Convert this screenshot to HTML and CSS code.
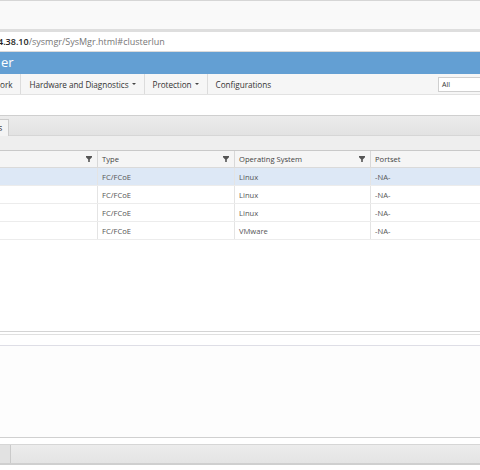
FILE: index.html
```html
<!DOCTYPE html>
<html lang="en">
<head>
  <meta charset="UTF-8" />
  <title>System Manager - LUNs</title>
  <link rel="stylesheet" href="styles.css">
</head>
<body>
  <div class="browser-top"></div>
  <div class="address">
    <span class="host">4.38.10</span><span class="path">/sysmgr/SysMgr.html#clusterlun</span>
  </div>

  <div class="titlebar">er</div>

  <div class="menubar">
    <ul class="menu">
      <li class="cut">ork</li>
      <li>Hardware and Diagnostics <span class="caret"></span></li>
      <li>Protection <span class="caret"></span></li>
      <li class="last">Configurations</li>
    </ul>
    <div class="search-scope">All</div>
  </div>

  <div class="spacer"></div>

  <div class="tabstrip">
    <div class="tab">s</div>
  </div>
  <div class="toolbar"></div>

  <div class="grid">
    <div class="row head">
      <div class="cell c1">
        <svg class="filter" width="6" height="6" viewBox="0 0 6 6"><path d="M0 0h6v1.2L3.8 3.4V6H2.2V3.4L0 1.2z" fill="#555"/></svg>
      </div>
      <div class="cell c2">Type
        <svg class="filter" width="6" height="6" viewBox="0 0 6 6"><path d="M0 0h6v1.2L3.8 3.4V6H2.2V3.4L0 1.2z" fill="#555"/></svg>
      </div>
      <div class="cell c3">Operating System
        <svg class="filter" width="6" height="6" viewBox="0 0 6 6"><path d="M0 0h6v1.2L3.8 3.4V6H2.2V3.4L0 1.2z" fill="#555"/></svg>
      </div>
      <div class="cell c4">Portset</div>
    </div>
    <div class="row selected">
      <div class="cell c1"></div>
      <div class="cell c2">FC/FCoE</div>
      <div class="cell c3">Linux</div>
      <div class="cell c4">-NA-</div>
    </div>
    <div class="row">
      <div class="cell c1"></div>
      <div class="cell c2">FC/FCoE</div>
      <div class="cell c3">Linux</div>
      <div class="cell c4">-NA-</div>
    </div>
    <div class="row">
      <div class="cell c1"></div>
      <div class="cell c2">FC/FCoE</div>
      <div class="cell c3">Linux</div>
      <div class="cell c4">-NA-</div>
    </div>
    <div class="row">
      <div class="cell c1"></div>
      <div class="cell c2">FC/FCoE</div>
      <div class="cell c3">VMware</div>
      <div class="cell c4">-NA-</div>
    </div>
  </div>

  <div class="splitter"></div>
  <div class="details"></div>
  <div class="hscroll">
    <div class="thumb"></div>
  </div>
</body>
</html>
```

FILE: styles.css
```css
* {
  box-sizing: border-box;
}

body {
  margin: 0;
  width: 480px;
  height: 470px;
  overflow: hidden;
  background: #fff;
  font-family: 'Open Sans', 'Segoe UI', sans-serif;
  color: #333;
}

.browser-top {
  height: 32px;
  background: #f9f9f9;
  border-top: 1px solid #d6d6d6;
  border-bottom: 3px solid #dedede;
}

.address {
  height: 20px;
  line-height: 19px;
  font-size: 9px;
  white-space: nowrap;
  border-bottom: 1px solid #dadada;
  text-indent: -2px;
}

.address .host {
  color: #222;
  font-weight: 600;
}

.address .path {
  color: #777;
}

.titlebar {
  height: 22px;
  line-height: 20px;
  background: #639fd3;
  color: #fff;
  font-size: 13px;
  padding-left: 1px;
}

.menubar {
  display: flex;
  justify-content: space-between;
  align-items: center;
  height: 21px;
  background: #f6f6f6;
  border-bottom: 1px solid #e2e2e2;
}

.menu {
  display: flex;
  margin: 0;
  padding: 0;
  list-style: none;
  height: 100%;
}

.menu li {
  display: flex;
  align-items: center;
  padding: 0 8px;
  font-size: 8.2px;
  letter-spacing: -0.05px;
  color: #333;
  border-right: 1px solid #dcdcdc;
  white-space: nowrap;
}

.menu li.cut {
  padding-left: 0;
}

.menu li.last {
  border-right: none;
}

.caret {
  display: inline-block;
  margin-left: 3px;
  border-left: 2px solid transparent;
  border-right: 2px solid transparent;
  border-top: 2px solid #444;
}

.search-scope {
  width: 46px;
  height: 15px;
  margin-right: -4px;
  border: 1px solid #cfcfcf;
  background: #fff;
  font-size: 7px;
  line-height: 13px;
  padding-left: 3px;
  color: #333;
}

.spacer {
  height: 20px;
}

.tabstrip {
  height: 21px;
  padding-top: 3px;
  background: linear-gradient(#ececec, #e2e2e2);
  border-top: 1px solid #cfcfcf;
  border-bottom: 1px solid #d6d6d6;
}

.tab {
  width: 9px;
  height: 17px;
  background: #f4f4f4;
  border: 1px solid #cccccc;
  border-left: none;
  border-bottom: none;
  font-size: 9px;
  line-height: 15px;
  text-indent: -2px;
  overflow: hidden;
}

.toolbar {
  height: 15px;
  background: #eeeeee;
  border-bottom: 1px solid #c9c9c9;
}

.grid {
  height: 180px;
  font-size: 7.6px;
}

.row {
  display: flex;
  height: 18px;
  border-bottom: 1px solid #ececec;
}

.row.head {
  height: 17px;
  background: #f5f5f5;
  border-bottom: 1px solid #dadada;
}

.row.selected {
  background: #dde8f6;
}

.cell {
  display: flex;
  align-items: center;
  justify-content: space-between;
  padding: 0 5px 0 4px;
  border-right: 1px solid #e4e4e4;
  color: #555;
}

.row.head .cell {
  border-right-color: #d8d8d8;
  color: #444;
}

.c1 {
  width: 98px;
  justify-content: flex-end;
}

.c2 {
  width: 137px;
}

.c3 {
  width: 136px;
}

.c4 {
  flex: 1;
  border-right: none;
}

.filter {
  flex: none;
}

.splitter {
  height: 15px;
  border-top: 1px solid #d4d4d4;
  border-bottom: 1px solid #dedee6;
  box-shadow: inset 0 2px 0 #fff, inset 0 3px 0 #e0e0e0;
}

.details {
  height: 92px;
  background: #fdfdfd;
  border-bottom: 1px solid #d0d0d0;
}

.hscroll {
  margin-top: 6px;
  height: 21px;
  background: linear-gradient(#ececec, #e4e4e4);
  border-top: 1px solid #d6d6d6;
  border-bottom: 2px solid #cfcfcf;
}

.thumb {
  width: 11px;
  height: 100%;
  background: #e2e2e2;
  border-right: 1px solid #cacaca;
}
```
